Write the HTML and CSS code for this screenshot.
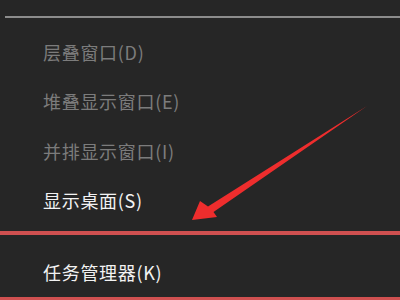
FILE: index.html
```html
<!DOCTYPE html>
<html lang="zh-CN">
<head>
<meta charset="utf-8">
<link rel="stylesheet" href="styles.css">
</head>
<body>
<div class="menu">
  <div class="rule"></div>
  <ul class="items">
    <li class="item disabled">层叠窗口(D)</li>
    <li class="item disabled">堆叠显示窗口(E)</li>
    <li class="item disabled">并排显示窗口(I)</li>
    <li class="item">显示桌面(S)</li>
  </ul>
  <div class="highlight">
    <div class="item">任务管理器(K)</div>
  </div>
  <svg class="arrow" width="400" height="300" viewBox="0 0 400 300">
    <polygon points="192,220 200,201 208,206.5 367,106 213.5,212 217,217" fill="#ee2d2d"/>
  </svg>
</div>
</body>
</html>
```
FILE: styles.css
```css
html, body {
  margin: 0;
  padding: 0;
  background: #262626;
  width: 400px;
  height: 300px;
  overflow: hidden;
}
.menu {
  position: relative;
  width: 400px;
  height: 300px;
  padding-top: 16px;
  box-sizing: border-box;
  font-family: "Noto Sans CJK SC", "Liberation Sans", sans-serif;
  font-size: 18px;
  letter-spacing: 0.7px;
}
.rule {
  height: 2px;
  margin-left: 5px;
  background: #8c8c8c;
}
.items {
  list-style: none;
  margin: 9.5px 0 0 0;
  padding: 0;
}
.item {
  height: 49.5px;
  line-height: 49.5px;
  padding-left: 43px;
  color: #f2f2f2;
  white-space: nowrap;
}
.item.disabled {
  color: #7c7c7c;
}
.highlight {
  margin-top: 5.5px;
  border-top: 4px solid #cf5050;
  border-bottom: 3px solid #cf5050;
  height: 62px;
  box-sizing: content-box;
}
.highlight .item {
  height: 62px;
  line-height: 62px;
  padding-top: 6px;
  box-sizing: border-box;
}
.arrow {
  position: absolute;
  left: 0;
  top: 0;
}
```
